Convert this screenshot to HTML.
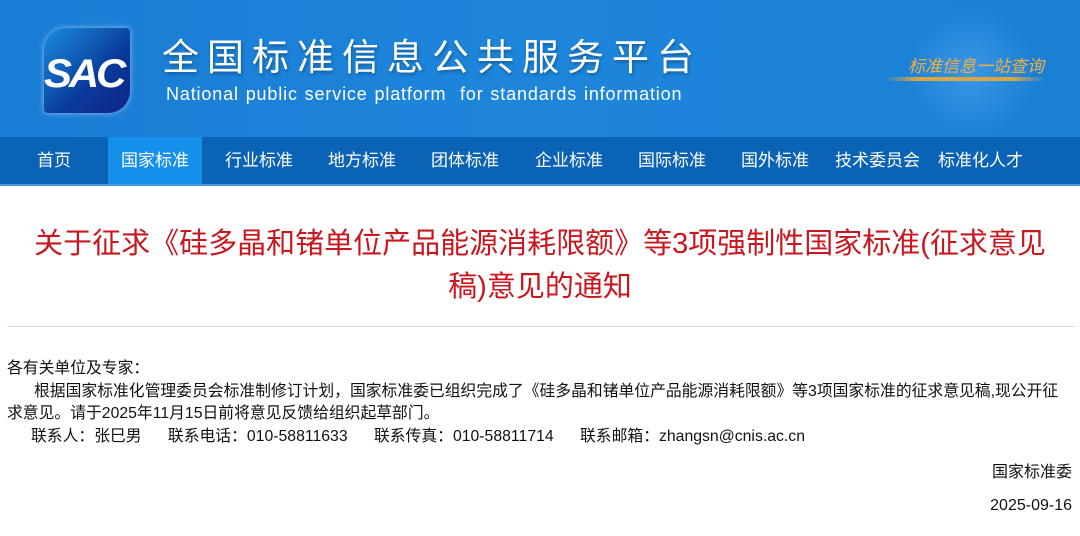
<!DOCTYPE html>
<html><head><meta charset="utf-8"><style>
*{margin:0;padding:0;box-sizing:border-box}
body{width:1080px;height:536px;overflow:hidden;background:#fff;font-family:"Liberation Sans","Noto Sans CJK SC",sans-serif;position:relative}
.hd{position:absolute;left:0;top:0;width:1080px;height:137px;background:linear-gradient(90deg,#1a7cd4 0%,#1d86db 50%,#1a80d6 100%)}
.logo{position:absolute;left:44px;top:28px;width:86px;height:85px;border-radius:22px 4px 22px 4px;background:linear-gradient(135deg,#1a8ee0,#0a3a9a 60%,#12238a);box-shadow:0 0 6px rgba(255,255,255,.5);overflow:hidden}
.logo span{position:absolute;left:0px;top:24px;font:italic bold 40px "Liberation Sans",sans-serif;color:#fff;letter-spacing:-3px;transform:scaleX(1.05);transform-origin:left}
.t1{position:absolute;left:162px;top:33px;font-size:37px;color:#fff;letter-spacing:8px;font-family:"Noto Sans CJK SC",sans-serif;line-height:42px;text-shadow:1px 2px 3px rgba(0,0,0,.3)}
.t2{position:absolute;left:166px;top:84px;font-size:18px;color:#fff;letter-spacing:0.85px;word-spacing:1px}
.globe{position:absolute;left:905px;top:10px;width:130px;height:125px;border-radius:50%;background:radial-gradient(circle at 50% 50%,rgba(120,190,255,.35),rgba(40,130,220,.1) 70%,transparent 72%)}
.slog{position:absolute;left:908px;top:52px;font:italic 17px "Noto Sans CJK SC",sans-serif;color:#f0b040}
.bar{position:absolute;left:885px;top:77px;width:160px;height:4px;background:linear-gradient(90deg,transparent,#d9a640 20%,#d9a640 80%,transparent);border-radius:2px}
.nav{position:absolute;left:0;top:137px;width:1080px;height:49px;background:#0a63b4;border-bottom:2px solid #4a9ae0}
.nav a{position:absolute;top:0;height:47px;line-height:47px;color:#fff;font-size:17px;text-decoration:none}
.nav a.on{background:#1590ea;padding:0 13px}
h1{position:absolute;left:0;top:223px;width:1080px;text-align:center;color:#c8171e;font-weight:normal;font-size:29px;line-height:43px;font-family:"Liberation Sans","Noto Sans CJK SC",sans-serif;white-space:nowrap}
.sep{position:absolute;left:7px;top:326px;width:1068px;height:1px;background:#e0e0e0}
.bd{position:absolute;left:7px;top:358px;width:1075px;font-size:15.8px;line-height:22.5px;color:#111;white-space:nowrap}
.r{position:absolute;right:8px;font-size:16px;color:#111}
</style></head><body>
<div class="hd">
<div class="logo"><span>SAC</span></div>
<div class="t1">全国标准信息公共服务平台</div>
<div class="t2">National public service platform &nbsp;for standards information</div>
<div class="globe"></div>
<div class="slog">标准信息一站查询</div>
<div class="bar"></div>
</div>
<div class="nav">
<a style="left:37px">首页</a>
<a class="on" style="left:108px">国家标准</a>
<a style="left:225px">行业标准</a>
<a style="left:328px">地方标准</a>
<a style="left:431px">团体标准</a>
<a style="left:535px">企业标准</a>
<a style="left:638px">国际标准</a>
<a style="left:741px">国外标准</a>
<a style="left:835px">技术委员会</a>
<a style="left:938px">标准化人才</a>
</div>
<h1>关于征求《硅多晶和锗单位产品能源消耗限额》等3项强制性国家标准(征求意见<br>稿)意见的通知</h1>
<div class="sep"></div>
<div class="bd">
各有关单位及专家：<br>
<span style="padding-left:27px">根据国家标准化管理委员会标准制修订计划，国家标准委已组织完成了《硅多晶和锗单位产品能源消耗限额》等3项国家标准的征求意见稿,现公开征</span><br>
求意见。请于2025年11月15日前将意见反馈给组织起草部门。<br>
<span style="padding-left:24px">联系人：张巳男&nbsp;&nbsp;&nbsp;&nbsp;&nbsp;&nbsp;联系电话：010-58811633&nbsp;&nbsp;&nbsp;&nbsp;&nbsp;&nbsp;联系传真：010-58811714&nbsp;&nbsp;&nbsp;&nbsp;&nbsp;&nbsp;联系邮箱：zhangsn@cnis.ac.cn</span>
</div>
<div class="r" style="top:458px">国家标准委</div>
<div class="r" style="top:497px">2025-09-16</div>
</body></html>
